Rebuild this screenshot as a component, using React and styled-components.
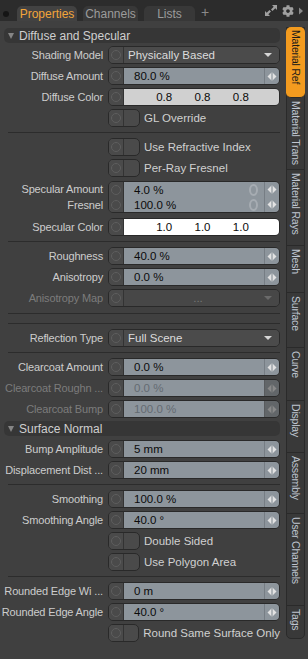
import React from "react";
import styled, { createGlobalStyle } from "styled-components";
import { FaCog } from "react-icons/fa";

const GlobalStyle = createGlobalStyle`
  html, body {
    margin: 0;
    padding: 0;
    background: #404040;
  }
  body {
    font-family: "Liberation Sans", Arial, sans-serif;
    font-size: 11px;
  }
`;

const Page = styled.div`
  width: 308px;
  height: 659px;
  background: #404040;
  overflow: hidden;
  display: flex;
  flex-direction: column;
`;

const TopBar = styled.div`
  height: 21px;
  background: #2c2c2c;
  display: flex;
  align-items: flex-end;
  flex-shrink: 0;
`;

const Grip = styled.span`
  width: 6px;
  height: 6px;
  border-radius: 50%;
  background: #151515;
  margin: 0 0 4px 3px;
`;

const Tab = styled.div`
  width: ${(p) => p.$w}px;
  height: 15px;
  margin-left: ${(p) => p.$ml}px;
  border-radius: 5px 5px 0 0;
  background: ${(p) => (p.$active ? "#424242" : "#383838")};
  color: ${(p) => (p.$active ? "#f2a53a" : "#9c9c9c")};
  font-size: 12px;
  display: flex;
  align-items: center;
  justify-content: center;
`;

const AddTab = styled.span`
  color: #8a8a8a;
  font-size: 14px;
  margin: 0 0 1px 6px;
  line-height: 15px;
`;

const TopIcons = styled.div`
  margin-left: auto;
  display: flex;
  align-items: center;
  gap: 4px;
  height: 21px;
  padding-right: 4px;
`;

const Body = styled.div`
  flex: 1;
  display: flex;
`;

const Panel = styled.div`
  width: 276px;
  padding: 7px 0 0 4px;
  display: flex;
  flex-direction: column;
  gap: 3px;
`;

const SectionHeader = styled.div`
  height: 15px;
  border-radius: 5px;
  background: #363636;
  color: #cfcfcf;
  font-size: 12px;
  display: flex;
  align-items: center;
  padding-left: 4px;
  gap: 5px;
  margin-bottom: ${(p) => p.$mb || 0}px;
  &::before {
    content: "";
    border-left: 3.5px solid transparent;
    border-right: 3.5px solid transparent;
    border-top: 6px solid #858585;
    margin-top: 1px;
  }
`;

const Row = styled.div`
  display: grid;
  grid-template-columns: 99px 172px;
  column-gap: 5px;
  align-items: center;
  height: ${(p) => p.$h || 18}px;
  margin: ${(p) => p.$m || 0};
`;

const Label = styled.div`
  display: flex;
  flex-direction: ${(p) => (p.$stack ? "column" : "row")};
  align-items: flex-end;
  justify-content: flex-end;
  line-height: 16px;
  white-space: nowrap;
  font-size: 11px;
  letter-spacing: -0.15px;
  color: ${(p) => (p.$dim ? "#7c7c7c" : "#cdcdcd")};
`;

const Field = styled.div`
  height: ${(p) => p.$h || 18}px;
  box-sizing: border-box;
  border: 1px solid #292929;
  border-radius: 5px;
  overflow: hidden;
  display: flex;
  flex-direction: column;
`;

const Line = styled.div`
  flex: 1;
  display: flex;
`;

const Knob = styled.div`
  width: 14px;
  flex-shrink: 0;
  background: #4a4a4a;
  border-right: 1px solid #333;
  display: flex;
  align-items: center;
  justify-content: center;
  &::after {
    content: "";
    width: 8px;
    height: 8px;
    border-radius: 50%;
    border: 1px solid #5e5e5e;
  }
`;

const tones = {
  number: { bg: "#8d959c", fg: "#0b0b0b" },
  dimNumber: { bg: "#8d959c", fg: "#646b72" },
  menu: { bg: "#4b4b4b", fg: "#dcdcdc" },
  dimMenu: { bg: "#474747", fg: "#777" },
  grey: { bg: "#d0d0d0", fg: "#0b0b0b" },
  white: { bg: "#ffffff", fg: "#0b0b0b" },
};

const Value = styled.div`
  flex: 1;
  display: flex;
  align-items: center;
  font-size: 11.5px;
  background: ${(p) => tones[p.$tone].bg};
  color: ${(p) => tones[p.$tone].fg};
  padding-left: ${(p) => p.$pl ?? 10}px;
`;

const Centered = styled.span`
  flex: 1;
  text-align: center;
  padding-left: 8px;
`;

const Channels = styled.div`
  flex: 1;
  display: grid;
  grid-template-columns: repeat(3, 1fr);
  padding: 0 19px 0 21px;
  align-items: center;
  font-size: 11.5px;
  background: ${(p) => tones[p.$tone].bg};
  color: #0b0b0b;
  text-align: center;
`;

const Arrows = styled.div`
  width: 14px;
  flex-shrink: 0;
  background: #8d959c;
  border-left: 1px solid #767d84;
  display: flex;
  align-items: center;
  justify-content: center;
  opacity: ${(p) => (p.$dim ? 0.45 : 1)};
`;

const Keyed = styled.span`
  width: 5px;
  height: 8px;
  border-radius: 50%;
  border: 2px solid #a6acb2;
  margin-left: auto;
  margin-right: 6px;
`;

const Caret = styled.span`
  margin-left: auto;
  margin-right: 7px;
  border-left: 4px solid transparent;
  border-right: 4px solid transparent;
  border-top: 4px solid ${(p) => (p.$dim ? "#6a6a6a" : "#d6d6d6")};
`;

const ToggleWrap = styled.div`
  display: flex;
  align-items: center;
  gap: 4px;
`;

const ToggleBox = styled.div`
  width: 32px;
  height: 18px;
  box-sizing: border-box;
  border: 1px solid #292929;
  border-radius: 5px;
  overflow: hidden;
  display: flex;
  background: #4a4a4a;
`;

const ToggleText = styled.span`
  font-size: 11.5px;
  color: #d0d0d0;
  white-space: nowrap;
`;

const Separator = styled.div`
  height: 5px;
  margin-left: 4px;
  display: flex;
  align-items: center;
  &::after {
    content: "";
    flex: 1;
    height: 1px;
    background: #2c2c2c;
  }
`;

const DoubleSeparator = styled.div`
  height: 9px;
  margin: 3px 0 2px 4px;
  border-top: 1px solid #2c2c2c;
  border-bottom: 1px solid #2c2c2c;
`;

const SideTabs = styled.div`
  margin: 6px 0 0 6px;
  width: 17px;
  display: flex;
  flex-direction: column;
  align-self: flex-start;
  background: #393939;
  border: 1px solid #2a2a2a;
  border-radius: 0 0 5px 5px;
`;

const SideTab = styled.div`
  height: ${(p) => p.$h}px;
  box-sizing: border-box;
  writing-mode: vertical-rl;
  font-size: 10.5px;
  letter-spacing: -0.2px;
  padding-top: 3px;
  display: flex;
  align-items: center;
  white-space: nowrap;
  overflow: hidden;
  color: ${(p) => (p.$active ? "#1a1a1a" : "#bfc5d0")};
  background: ${(p) => (p.$active ? "#f39b1f" : "transparent")};
  border-radius: ${(p) => (p.$active ? "5px" : "0")};
  border-bottom: ${(p) => (p.$last ? "none" : "1px solid #2a2a2a")};
  margin: ${(p) => (p.$active ? "-1px -1px 0" : "0")};
`;

const ArrowIcon = () => (
  <svg width="10" height="9" viewBox="0 0 10 9">
    <path d="M4 1 L0.5 4.5 L4 8 Z" fill="#e2e2e2" />
    <rect x="4.6" y="0.5" width="0.8" height="8" fill="#e2e2e2" />
    <path d="M6 1 L9.5 4.5 L6 8 Z" fill="#e2e2e2" />
  </svg>
);

const ExpandIcon = () => (
  <svg width="14" height="13" viewBox="0 0 14 13">
    <path d="M8 1 H13 V6 L11.3 4.3 L8.5 7 L7 5.5 L9.7 2.7 Z" fill="#a0a0a0" />
    <path d="M1 12 V7 L2.7 8.7 L5.5 6 L7 7.5 L4.3 10.3 L6 12 Z" fill="#a0a0a0" />
  </svg>
);

const NumberLine = ({ value, dim, keyed }) => (
  <Line>
    <Knob />
    <Value $tone={dim ? "dimNumber" : "number"}>
      {value}
      {keyed && <Keyed />}
    </Value>
    <Arrows $dim={dim}>
      <ArrowIcon />
    </Arrows>
  </Line>
);

const NumberField = ({ label, value, dim }) => (
  <Row>
    <Label $dim={dim}>{label}</Label>
    <Field>
      <NumberLine value={value} dim={dim} />
    </Field>
  </Row>
);

const ColorField = ({ label, values, tone }) => (
  <Row>
    <Label>{label}</Label>
    <Field>
      <Line>
        <Knob />
        <Channels $tone={tone}>
          {values.map((v, i) => (
            <span key={i}>{v}</span>
          ))}
        </Channels>
      </Line>
    </Field>
  </Row>
);

const MenuField = ({ label, value, dim }) => (
  <Row>
    <Label $dim={dim}>{label}</Label>
    <Field>
      <Line>
        <Knob />
        <Value $tone={dim ? "dimMenu" : "menu"} $pl={dim ? 0 : 4}>
          {dim ? <Centered>{value}</Centered> : value}
          <Caret $dim={dim} />
        </Value>
      </Line>
    </Field>
  </Row>
);

const Toggle = ({ text }) => (
  <Row>
    <span />
    <ToggleWrap>
      <ToggleBox>
        <Knob />
      </ToggleBox>
      <ToggleText>{text}</ToggleText>
    </ToggleWrap>
  </Row>
);

const sideTabs = [
  ["Material Ref", 71],
  ["Material Trans", 72],
  ["Material Rays", 76],
  ["Mesh", 47],
  ["Surface", 55],
  ["Curve", 53],
  ["Display", 52],
  ["Assembly", 61],
  ["User Channels", 92],
  ["Tags", 32],
];

export default function App() {
  return (
    <>
      <GlobalStyle />
      <Page>
        <TopBar>
          <Grip />
          <Tab $w={60} $ml={8} $active>
            Properties
          </Tab>
          <Tab $w={55} $ml={6}>
            Channels
          </Tab>
          <Tab $w={51} $ml={6}>
            Lists
          </Tab>
          <AddTab>+</AddTab>
          <TopIcons>
            <ExpandIcon />
            <FaCog size={12} color="#a0a0a0" />
            <svg width="6" height="8" viewBox="0 0 6 8">
              <path d="M1 0.5 L5 4 L1 7.5 Z" fill="#8a8a8a" />
            </svg>
          </TopIcons>
        </TopBar>
        <Body>
          <Panel>
            <SectionHeader>Diffuse and Specular</SectionHeader>
            <MenuField label="Shading Model" value="Physically Based" />
            <NumberField label="Diffuse Amount" value="80.0 %" />
            <ColorField label="Diffuse Color" values={["0.8", "0.8", "0.8"]} tone="grey" />
            <Toggle text="GL Override" />
            <Separator />
            <Toggle text="Use Refractive Index" />
            <Toggle text="Per-Ray Fresnel" />
            <Row $h={32} $m="1px 0 2px">
              <Label $stack>
                <span>Specular Amount</span>
                <span>Fresnel</span>
              </Label>
              <Field $h={32}>
                <NumberLine value="4.0 %" keyed />
                <NumberLine value="100.0 %" keyed />
              </Field>
            </Row>
            <ColorField label="Specular Color" values={["1.0", "1.0", "1.0"]} tone="white" />
            <Separator />
            <NumberField label="Roughness" value="40.0 %" />
            <NumberField label="Anisotropy" value="0.0 %" />
            <MenuField label="Anisotropy Map" value="..." dim />
            <DoubleSeparator />
            <MenuField label="Reflection Type" value="Full Scene" />
            <Separator />
            <NumberField label="Clearcoat Amount" value="0.0 %" />
            <NumberField label="Clearcoat Roughn ..." value="0.0 %" dim />
            <NumberField label="Clearcoat Bump" value="100.0 %" dim />
            <SectionHeader $mb={1}>Surface Normal</SectionHeader>
            <NumberField label="Bump Amplitude" value="5 mm" />
            <NumberField label="Displacement Dist ..." value="20 mm" />
            <Separator />
            <NumberField label="Smoothing" value="100.0 %" />
            <NumberField label="Smoothing Angle" value="40.0 °" />
            <Toggle text="Double Sided" />
            <Toggle text="Use Polygon Area" />
            <Separator />
            <NumberField label="Rounded Edge Wi ..." value="0 m" />
            <NumberField label="Rounded Edge Angle" value="40.0 °" />
            <Toggle text="Round Same Surface Only" />
          </Panel>
          <SideTabs>
            {sideTabs.map(([name, h], i) => (
              <SideTab key={name} $h={h} $active={i === 0} $last={i === sideTabs.length - 1}>
                {name}
              </SideTab>
            ))}
          </SideTabs>
        </Body>
      </Page>
    </>
  );
}
